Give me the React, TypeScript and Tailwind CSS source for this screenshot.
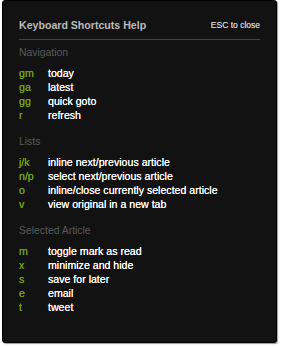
const sections = [
  {
    title: 'Navigation',
    items: [
      ['gm', 'today'],
      ['ga', 'latest'],
      ['gg', 'quick goto'],
      ['r', 'refresh'],
    ],
  },
  {
    title: 'Lists',
    items: [
      ['j/k', 'inline next/previous article'],
      ['n/p', 'select next/previous article'],
      ['o', 'inline/close currently selected article'],
      ['v', 'view original in a new tab'],
    ],
  },
  {
    title: 'Selected Article',
    items: [
      ['m', 'toggle mark as read'],
      ['x', 'minimize and hide'],
      ['s', 'save for later'],
      ['e', 'email'],
      ['t', 'tweet'],
    ],
  },
];

export default function App() {
  return (
    <div className="w-[281px] h-[347px] bg-white font-['Liberation_Sans',Arial,sans-serif]">
      <div className="ml-[2px] w-[275px] h-[343px] bg-[#121212] border border-black rounded-[3px] shadow-[1px_1px_1px_#999] px-[16px] pt-[17px]">
        <div className="flex items-center justify-between h-[14px]">
          <h1 className="text-[10.6px] font-bold text-[#bbbbbb] leading-[14px]">Keyboard Shortcuts Help</h1>
          <span className="text-[8.5px] text-[#cccccc] leading-[14px] [text-shadow:0_0_0.4px_#ccc]">ESC to close</span>
        </div>
        <div className="mt-[7px] h-px bg-[#444444]" />
        {sections.map((section, index) => (
          <div key={index} className={index === 0 ? 'mt-[6px]' : 'mt-[13px]'}>
            <h2 className="text-[10.4px] text-[#5a5a5a] leading-[14px] h-[14px] mb-[6px]">{section.title}</h2>
            {section.items.map(([key, label], idx) => (
              <div key={idx} className="flex h-[14px] leading-[14px] text-[10.6px] [text-shadow:0_0_0.5px_currentColor]">
                <span className="w-[29px] shrink-0 text-[#72a212]">{key}</span>
                <span className="text-white">{label}</span>
              </div>
            ))}
          </div>
        ))}
      </div>
    </div>
  );
}
